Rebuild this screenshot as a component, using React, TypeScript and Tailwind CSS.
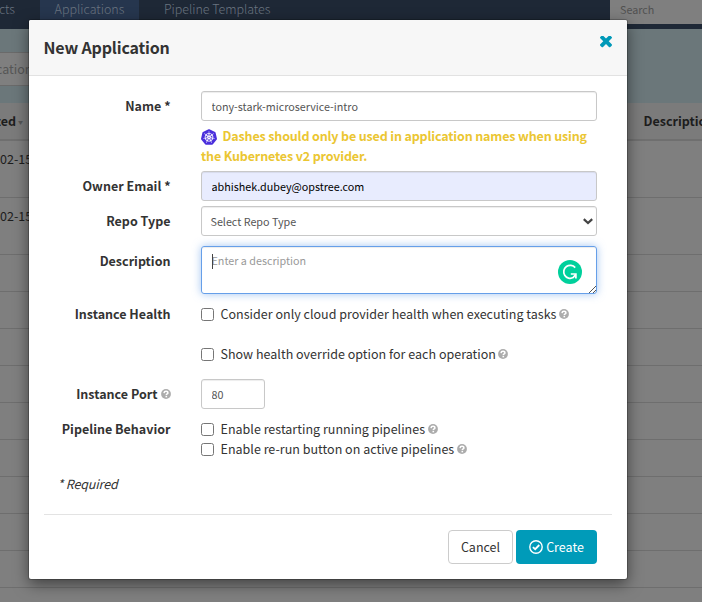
import React from "react";
import { SiKubernetes } from "react-icons/si";

const FONT = "font-['Noto_Sans_CJK_SC','Noto_Sans',sans-serif]";

function Help() {
  return (
    <svg viewBox="0 0 10 10" className="size-[10px] shrink-0">
      <circle cx="5" cy="5" r="4.9" fill="#acacac" />
      <path d="M3 4.1C3.1 2.8 4 2.3 5 2.3s1.9.6 1.9 1.6C6.9 5 5.3 4.9 5.3 6.1" fill="none" stroke="#fff" strokeWidth="1.5" />
      <rect x="4.5" y="6.8" width="1.6" height="1.5" fill="#fff" />
    </svg>
  );
}

function Check({ children, className = "" }: { children: React.ReactNode; className?: string }) {
  return (
    <label className={`flex h-5 items-center whitespace-nowrap ${className}`}>
      <input type="checkbox" className="mr-[6.5px] size-[13px] shrink-0 appearance-none rounded-[2.5px] border border-[#767676] bg-white" />
      <span className="mr-[2.5px] tracking-[0.015px]">{children}</span>
      <Help />
    </label>
  );
}

function Row({ label, help, className = "", children }: { label: string; help?: boolean; className?: string; children: React.ReactNode }) {
  return (
    <div className={`flex ${className}`}>
      <div className="mr-[30.5px] flex h-[30px] w-[126.5px] shrink-0 items-center justify-end gap-[3px] whitespace-nowrap font-bold">
        {label}
        {help && <Help />}
      </div>
      <div className="w-[396px]">{children}</div>
    </div>
  );
}

const rows = [57, 57, 37, 37, 37, 37, 37, 37, 37, 37, 37];
const rowHeight: Record<number, string> = { 57: "h-[57px]", 37: "h-[37px]" };

function Page() {
  return (
    <div className="flex h-full flex-col bg-[#7f7f7f] text-[12.5px] text-[#1d1d1d]">
      <nav className="flex h-[29px] shrink-0 bg-[#1e2836] text-[12.5px] font-light text-[#6a7480]">
        <div className="flex h-[19px] w-10 items-center justify-end pr-[25px]">Projects</div>
        <div className="flex h-5 w-[99px] items-center justify-center bg-[#26364e] pb-px">Applications</div>
        <div className="flex h-[19px] flex-1 items-center whitespace-nowrap pl-[25px] tracking-[-0.05px]">Pipeline Templates</div>
        <div className="flex h-6 w-[92px] items-center bg-[#7f7f7f] pb-[3px] pl-[10px] text-[10.75px] font-normal text-[#515151]">Search</div>
      </nav>
      <div className="h-[74px] shrink-0 bg-[#6b777a] pt-[23px]">
        <div className="flex h-[34px] w-40 items-center border-y border-[#6a6a6a] bg-[#7f7f7f] text-[12.5px] text-[#565656]">
          <span className="-ml-1">cations</span>
        </div>
      </div>
      <div className="flex h-[38px] shrink-0 items-center justify-between border-b-2 border-[#6f6f6f] bg-[#7b7b7b] font-bold">
        <div className="flex items-center">
          <span className="-ml-[32px]">Created</span>
          <span className="ml-[2px] mt-[2px] text-[5px] text-[#555]">▼</span>
        </div>
        <span className="w-[58.5px] whitespace-nowrap">Description</span>
      </div>
      {rows.map((h, i) => (
        <div key={i} className={`${rowHeight[h]} shrink-0 border-b border-[#6e6e6e]`}>
          {i < 2 && <div className="mt-2 h-5 leading-5">02-15</div>}
        </div>
      ))}
    </div>
  );
}

const INPUT = "h-[30px] w-full rounded-[3px] border border-[#c8c8c8] px-[9.5px] text-[10.75px] text-[#555] shadow-[inset_0_1px_1px_rgba(0,0,0,0.075)] outline-none";

export default function App() {
  return (
    <div className={`relative h-[602px] w-[702px] overflow-hidden ${FONT}`}>
      <Page />
      <div className="absolute left-[29px] top-5 flex h-[559px] w-[598px] flex-col overflow-hidden rounded-[2px] bg-white text-[12.5px] leading-5 text-[#333] shadow-[0_0_0_1px_rgba(0,0,0,0.2),0_5px_15px_rgba(0,0,0,0.5)]">
        <header className="flex h-14 shrink-0 justify-between border-b border-[#e2e2e2] bg-[#f7f7f7] pl-[14.5px] pr-[15px]">
          <h3 className="pt-[17px] text-[16px] font-semibold tracking-[-0.17px]">New Application</h3>
          <svg viewBox="302 302 1188 1188" className="mt-[15.5px] size-[12px]" fill="#0099b8">
            <path transform="translate(0 -130)" d="M1490 1322q0 40-28 68l-136 136q-28 28-68 28t-68-28l-294-294-294 294q-28 28-68 28t-68-28l-136-136q-28-28-28-68t28-68l294-294-294-294q-28-28-28-68t28-68l136-136q28-28 68-28t68 28l294 294 294-294q28-28 68-28t68 28l136 136q28 28 28 68t-28 68l-294 294 294 294q28 28 28 68z" />
          </svg>
        </header>
        <div className="flex flex-col px-[15px] pt-[15px]">
          <Row label="Name *">
            <input className={INPUT} defaultValue="tony-stark-microservice-intro" />
            <p className="mt-[5px] h-[45px] whitespace-nowrap font-semibold tracking-[-0.15px] text-[#ebc632]">
              <SiKubernetes className="mr-[5.5px] inline size-4 align-[-4px] text-[#4a2fdc]" />
              Dashes should only be used in application names when using
              <br />
              the Kubernetes v2 provider.
            </p>
          </Row>
          <Row label="Owner Email *">
            <input className={`${INPUT} bg-[#e8ecfe] !text-black`} defaultValue="abhishek.dubey@opstree.com" />
          </Row>
          <Row label="Repo Type" className="mt-[5px]">
            <div className={`${INPUT} flex items-center justify-between !pl-[8.5px] !pr-[3px]`}>
              <span className="pt-[2px]">Select Repo Type</span>
              <svg viewBox="0 0 10 7" className="h-[7px] w-[10px]"><path d="M.8 1.1 5 5 9.2 1.1" fill="none" stroke="#444" strokeWidth="2.2" /></svg>
            </div>
          </Row>
          <Row label="Description" className="mt-[10px]">
            <div className="relative h-12 rounded-[3px] border border-[#669fe9] pl-[9.5px] pt-[4px] text-[10.75px] text-[#999] shadow-[inset_0_1px_1px_rgba(0,0,0,0.075),0_0_8px_rgba(102,159,233,0.6)]">
              Enter a description
              <span className="absolute left-[10px] top-[7px] h-[15px] w-px bg-[#444]" />
              <svg viewBox="0 0 24 24" className="absolute right-[14px] top-[13px] size-6">
                <circle cx="12" cy="12" r="12" fill="#00d09c" />
                <path d="M17.2 7.6A6.5 6.5 0 1 0 15.2 17.6L17.6 14.4" fill="none" stroke="#fff" strokeWidth="1.7" />
                <path d="M12.8 14H17.9V18.6" fill="none" stroke="#fff" strokeWidth="1.7" />
              </svg>
              <svg viewBox="0 0 8 8" className="absolute bottom-0 right-0 size-2"><path d="M1 8 8 1M5 8 8 5" stroke="#555" strokeWidth="1" /></svg>
            </div>
          </Row>
          <Row label="Instance Health" className="mt-[5px]">
            <Check className="mt-[5px]">Consider only cloud provider health when executing tasks</Check>
            <Check className="mt-5">Show health override option for each operation</Check>
          </Row>
          <Row label="Instance Port" help className="mt-[15px]">
            <input className={`${INPUT} !w-16`} defaultValue="80" />
          </Row>
          <Row label="Pipeline Behavior" className="mt-[5px]">
            <Check className="mt-[5px]">Enable restarting running pipelines</Check>
            <Check>Enable re-run button on active pipelines</Check>
          </Row>
          <p className="mt-[15px] pl-[13.5px] italic tracking-[-0.15px]">* Required</p>
          <footer className="mt-5 flex justify-end gap-[3px] border-t border-[#e3e3e3] pr-[15px] pt-[15px] text-[12.5px]">
            <button className="h-[34px] w-[65px] rounded-[4px] border border-[#ccc] bg-white">Cancel</button>
            <button className="flex h-[34px] w-[81px] items-center justify-center gap-[3px] rounded-[4px] bg-[#009bb9] text-white">
              <svg viewBox="0 0 14 14" className="size-[14px]" fill="none" stroke="#fff">
                <circle cx="7" cy="7" r="6.2" strokeWidth="1.4" />
                <path d="M3.9 7.1 6.2 9.2 10.3 5" strokeWidth="1.8" />
              </svg>
              Create
            </button>
          </footer>
        </div>
      </div>
    </div>
  );
}
